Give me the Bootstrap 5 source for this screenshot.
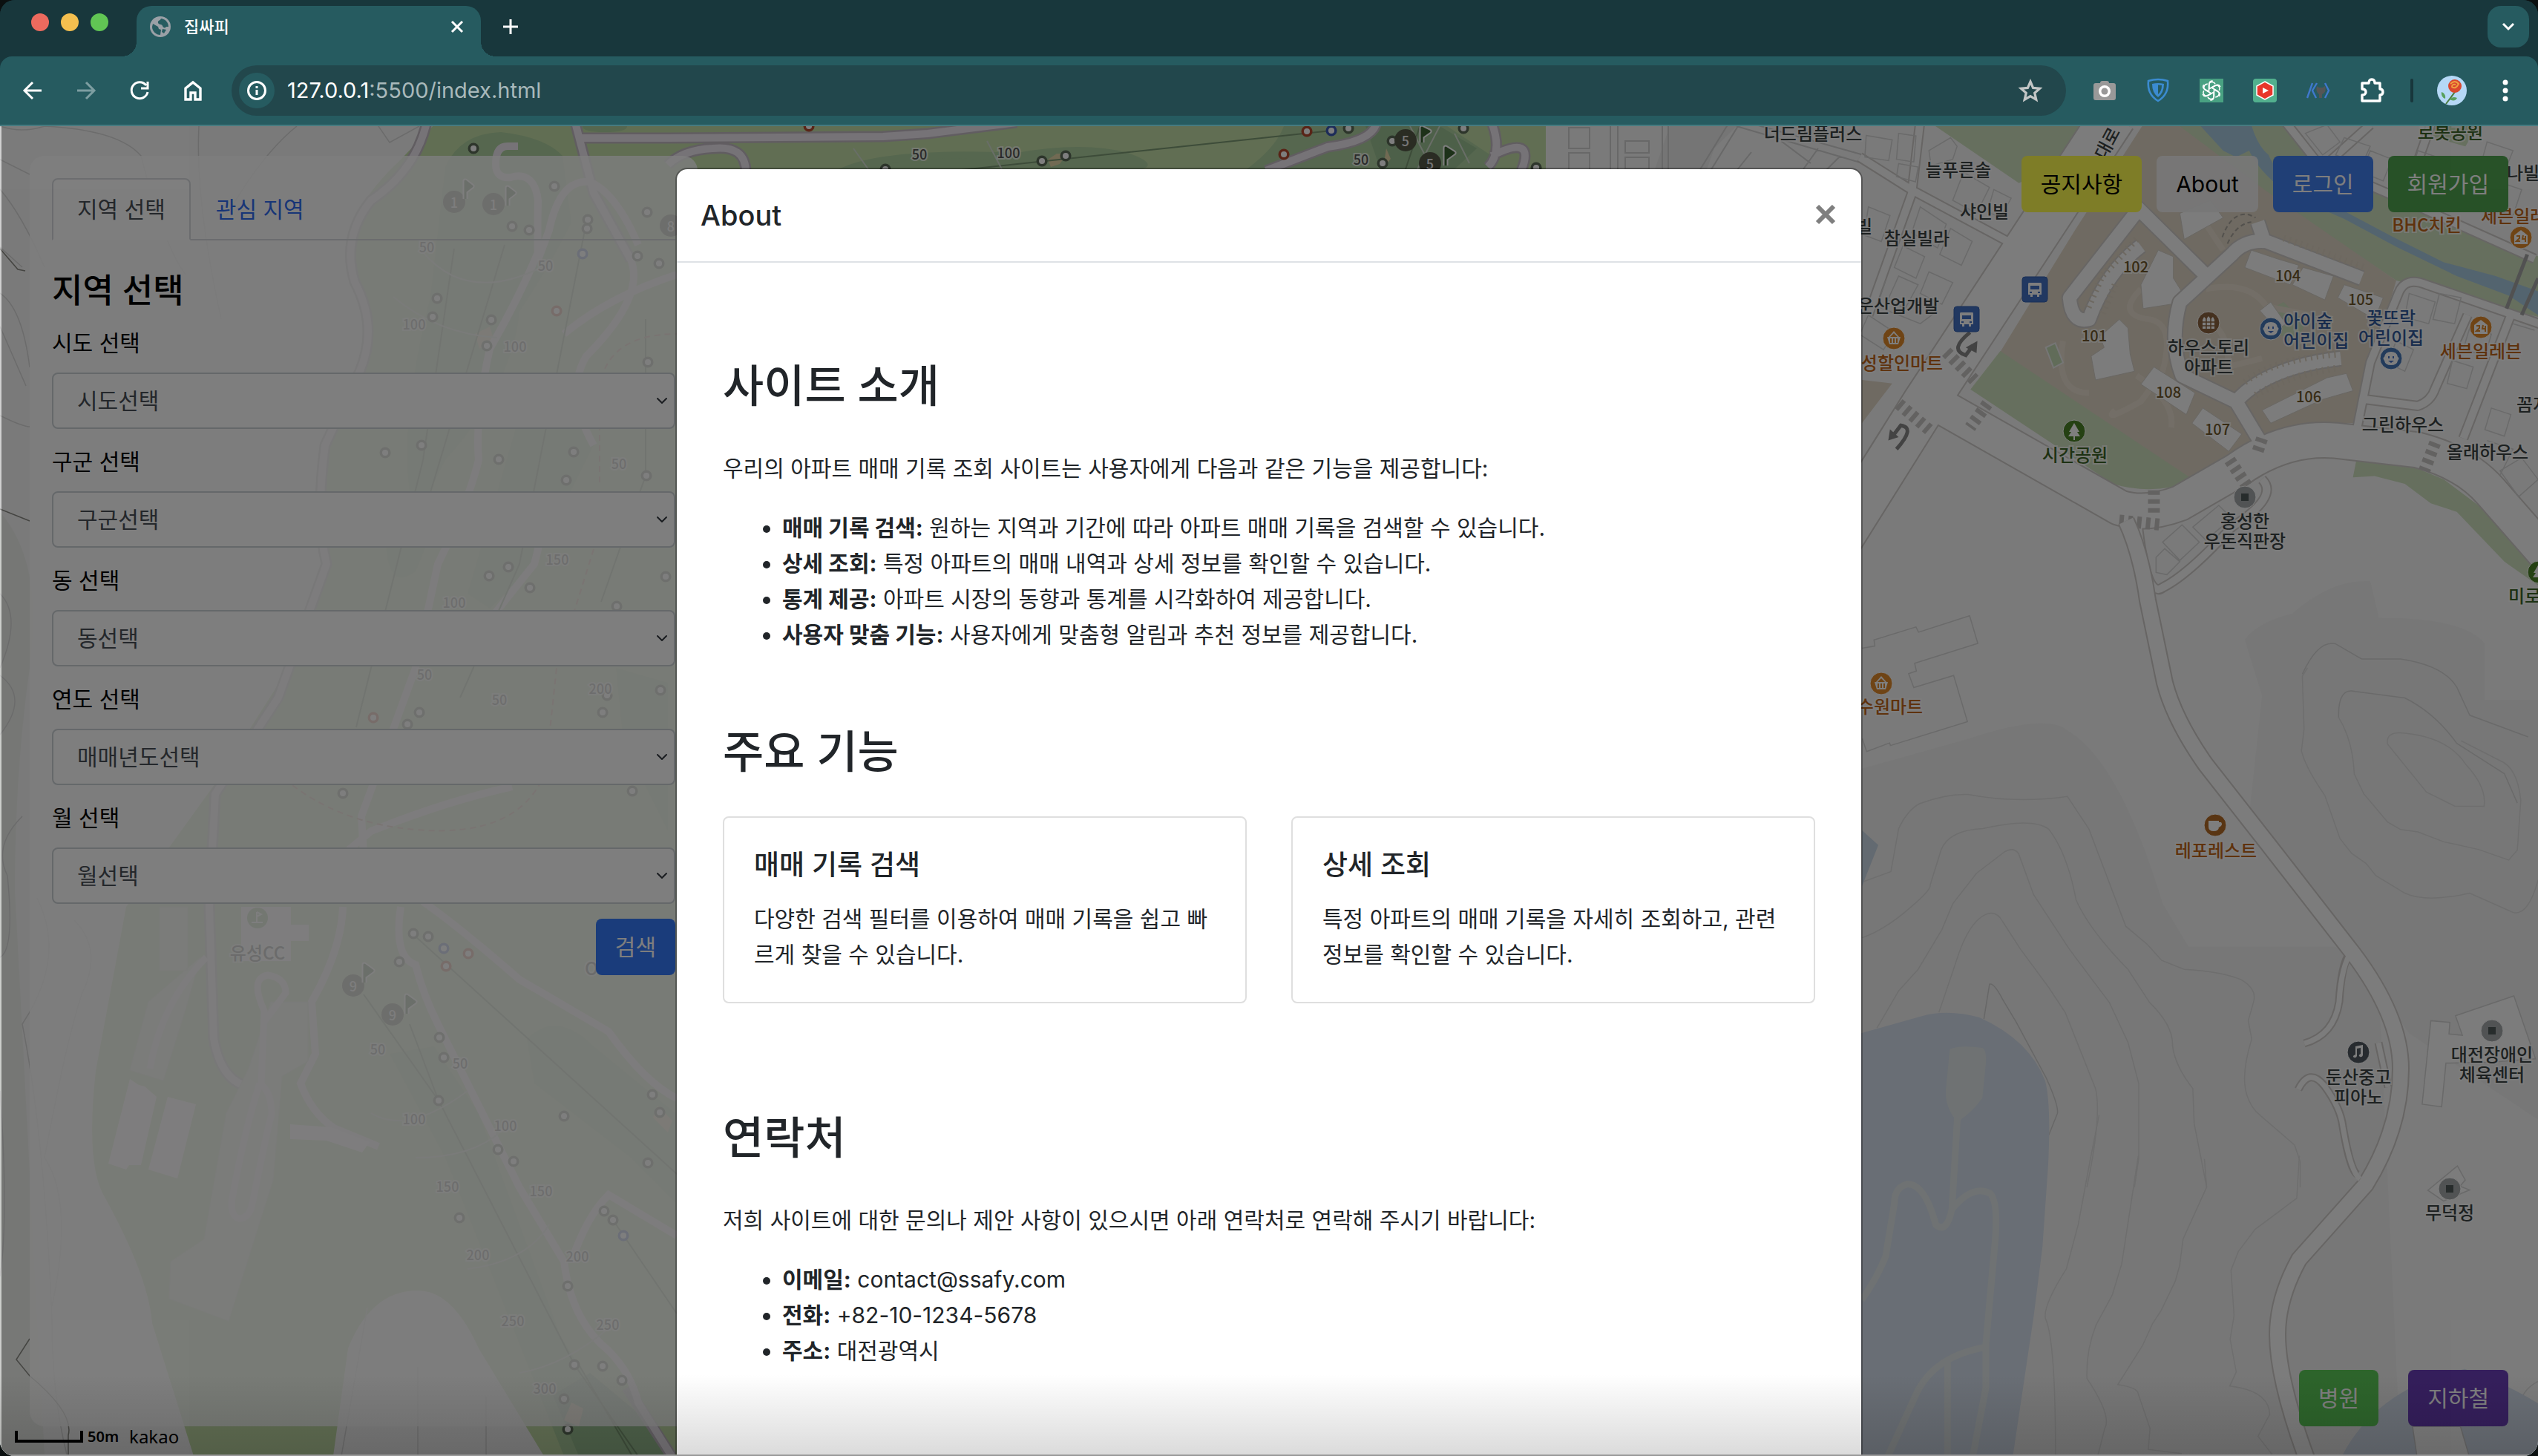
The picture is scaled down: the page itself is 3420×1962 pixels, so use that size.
<!DOCTYPE html>
<html lang="ko">
<head>
<meta charset="utf-8">
<meta name="viewport" content="width=device-width, initial-scale=1">
<title>집싸피</title>
<link href="https://cdn.jsdelivr.net/npm/bootstrap@5.3.0/dist/css/bootstrap.min.css" rel="stylesheet">
<style>
:root{font-size:32px}
html,body{height:100%}
body{font-family:Inter,"Noto Sans CJK KR",sans-serif;font-size:30px;line-height:48px;background:#0b1010;overflow:hidden}
.window{height:100vh;border-radius:20px;overflow:hidden;background:#18373c}
/* browser bars */
.tabstrip{height:76px;background:#18373c;padding:8px 12px 0 42px}
.light{width:24px;height:24px;border-radius:50%;margin-right:16px}
.tab-now{position:relative;width:464px;height:68px;margin-left:22px;padding:0 22px 12px 18px;background:#265b60;border-radius:20px 20px 0 0;color:#fff;font-size:22px}
.tab-now::before,.tab-now::after{content:"";position:absolute;bottom:0;width:20px;height:20px}
.tab-now::before{left:-20px;background:radial-gradient(circle at 0 0,transparent 20px,#265b60 20px)}
.tab-now::after{right:-20px;background:radial-gradient(circle at 100% 0,transparent 20px,#265b60 20px)}
.tab-title{margin-left:18px}
.bare{border:0;background:none;padding:0;line-height:0;color:#fff}
.newtab{height:56px;margin-left:29px}
.chev{width:56px;height:56px;border-radius:18px;background:#265b60}
.toolbar{height:94px;background:#265b60;border-bottom:2px solid #467b80;border-radius:16px 16px 0 0;padding:0 40px 0 26px}
.navset{gap:36px;width:286px}
.omni{height:68px;border-radius:34px;background:#22474c;padding:0 30px 0 10px}
.site-info{width:48px;height:48px;border-radius:50%;background:#265b60}
.url{border:0;background:none;color:#a9b9bb;font-size:29px;line-height:40px;margin-left:17px}
.url b{color:#fff;font-weight:400}
.exts{gap:40px;padding-left:36px}
.exts svg{overflow:visible}
.sep{width:4px;height:32px;border-radius:2px;background:#18373c;margin:0 -8px 0 -4px}
.avatar{margin-right:8px}
/* page */
.stage{background:#f6f6f6}
.mapbg{inset:0;width:100%;height:100%}
.mapbg text{font-family:"Noto Sans CJK KR",sans-serif;font-size:24px;font-weight:500;text-anchor:middle;dominant-baseline:central;fill:#3c4444;stroke:#fff;stroke-width:4px;stroke-opacity:.7;paint-order:stroke}
.mapbg .num{font-size:20px;fill:#70582c}
.mapbg .dist{font-size:18px;fill:#555}
.mapbg .og{fill:#c0651a}.mapbg .gr{fill:#3c6428}.mapbg .bl{fill:#325a9c}.mapbg .st{text-anchor:start}.mapbg .wh{fill:#eee;stroke:none;font-size:18px}
.mapbg path,.mapbg rect{vector-effect:non-scaling-stroke}
.overlay-ui{padding:40px}
.side{width:900px;padding:30px;background:rgba(255,255,255,.8);border-radius:20px;color:#000}
.side .nav-tabs{border-bottom:2px solid #d8dbdf;margin-bottom:36px}
.side .nav-link{border-width:2px;margin-bottom:-2px;padding:16px 32px;border-radius:8px 8px 0 0;color:#2f6cf0}
.side .nav-link.active{color:#495057;border-color:#d8dbdf #d8dbdf #fff;background:#fff}
.side h2{font-size:45px;line-height:64px;margin-bottom:14px}
.side label{display:block;margin-bottom:16px}
.side .form-select{height:76px;border:2px solid #ccd2d6;font-size:30px;line-height:48px;padding:10px 32px;color:#495057;border-radius:8px;margin-bottom:20px;background-position:right 6px center;background-size:20px 16px}
.btn{font-size:30px;line-height:48px;padding:12px 24px;border:2px solid transparent;border-radius:8px}
.btn-search{background:#367af8;color:#fff}
.btn-notice{background:#fefc50;color:#000}
.btn-about{background:rgba(240,240,240,.94);color:#000}
.btn-login{background:#4280ee;color:#fff}
.btn-join{background:#50a450;color:#fff}
.btn-hosp{background:#5cca58;color:#fff}
.btn-metro{background:#6a3eb8;color:#fff}
.actions{gap:20px}
.places{gap:40px}
.stage .modal-backdrop{position:absolute;width:100%;height:100%;border-left:2px solid #aaa}
.credit{position:absolute;z-index:1060;left:20px;bottom:10px;font-family:"Noto Sans",sans-serif;font-size:24px;line-height:32px;color:#000;gap:6px}
.credit small{font-size:20px;font-weight:600}
.scale-bar{width:92px;height:16px;border:4px solid #000;border-top:0}
.stage .modal{position:absolute;overflow:hidden}
.stage .modal-dialog{max-width:1600px;margin:56px auto}
.stage .modal-content{border:2px solid rgba(0,0,0,.3);border-radius:16px;min-height:1800px;color:#212529}
.stage .modal-header{padding:32px;border-bottom:2px solid #dee2e6}
.stage .modal-title{font-size:38px;line-height:60px}
.stage .modal-body{padding:128px 62px}
.stage .modal-body h2{font-size:60px;line-height:76px;margin-bottom:49px}
.stage .modal-body p{margin-bottom:32px}
.stage .modal-body ul{padding-left:80px;margin-bottom:96px}
.stage .modal-body .pair{gap:60px;margin-bottom:143px}
.pair .card{flex:1 1 0;border:2px solid #dfdfdf;border-radius:8px}
.pair .card-body{padding:40px}
.pair h3{font-size:37px;line-height:48px;margin-bottom:24px}
.stage .modal-body .card-text{margin:0}
.dockshade{position:absolute;z-index:1070;left:0;right:0;bottom:0;height:110px;background:linear-gradient(transparent,rgba(0,0,0,.14));border-bottom:2px solid #999;pointer-events:none}
</style>
<script src="https://cdn.jsdelivr.net/npm/bootstrap@5.3.0/dist/js/bootstrap.bundle.min.js"></script>
</head>
<body>
<div class="window d-flex flex-column">
<header>
  <div class="tabstrip d-flex">
    <div class="d-flex align-items-center pb-3 mb-1 pt-2"><span class="light" style="background:#ec6a5e"></span><span class="light" style="background:#f4bf4f"></span><span class="light" style="background:#61c554"></span></div>
    <div class="tab-now d-flex align-items-center">
      <svg width="28" height="28" viewBox="0 0 28 28"><circle cx="14" cy="14" r="14" fill="#9aa0a6"/><path d="M4 10l7 4 1 3 3 1-1 7c-6 0-11-5-11-11zM15 3c-1 3-5 2-4 6 2 3 5 1 6 4s4 3 5 1l3 0c0-6-4-10-10-11zM17 17l5 1-3 5-3-2z" fill="#265b60"/></svg>
      <span class="tab-title flex-grow-1 fw-medium">집싸피</span>
      <button class="bare" aria-label="탭 닫기"><svg width="20" height="20" viewBox="0 0 20 20" stroke="#fff" stroke-width="3"><path d="M3 3l14 14M17 3L3 17"/></svg></button>
    </div>
    <button class="bare newtab" aria-label="새 탭"><svg width="22" height="22" viewBox="0 0 22 22" stroke="#fff" stroke-width="3"><path d="M11 1v20M1 11h20"/></svg></button>
    <button class="bare chev ms-auto" aria-label="탭 검색"><svg width="18" height="12" viewBox="0 0 18 12" fill="none" stroke="#fff" stroke-width="3"><path d="M2 2l7 7 7-7"/></svg></button>
  </div>
  <div class="toolbar d-flex align-items-center">
    <div class="navset d-flex align-items-center">
      <button class="bare" aria-label="뒤로"><svg width="36" height="36" viewBox="0 0 36 36" fill="none" stroke="#fff" stroke-width="3"><path d="M30 18H8M18 7L7 18l11 11"/></svg></button>
      <button class="bare" aria-label="앞으로"><svg width="36" height="36" viewBox="0 0 36 36" fill="none" stroke="#7d9ea1" stroke-width="3"><path d="M6 18h22M18 7l11 11-11 11"/></svg></button>
      <button class="bare" aria-label="새로고침"><svg width="36" height="36" viewBox="0 0 36 36" fill="none" stroke="#fff" stroke-width="3"><path d="M27 11a11 11 0 1 0 2 9M29 6v9h-9"/></svg></button>
      <button class="bare" aria-label="홈"><svg width="36" height="36" viewBox="0 0 36 36" fill="none" stroke="#fff" stroke-width="3.4"><path d="M8 30V15l10-8 10 8v15h-7v-9h-6v9z"/></svg></button>
    </div>
    <div class="omni d-flex align-items-center flex-grow-1">
      <button class="bare site-info" aria-label="사이트 정보"><svg width="28" height="28" viewBox="0 0 28 28" fill="none" stroke="#fff" stroke-width="3"><circle cx="14" cy="14" r="11.500"/><path d="M14 13v7M14 8v3"/></svg></button>
      <span class="url flex-grow-1"><b>127.0.0.1</b>:5500/index.html</span>
      <button class="bare" aria-label="북마크"><svg width="36" height="36" viewBox="0 0 36 36" fill="none" stroke="#c3c6c6" stroke-width="3.2"><path d="M18 6l3.600 8.400 9 .8-6.900 6 2.100 9L18 25.600l-7.800 4.600 2.100-9-6.900-6 9-.8z"/></svg></button>
    </div>
    <div class="exts d-flex align-items-center">
      <svg width="32" height="32" viewBox="0 0 32 32"><path d="M10 6q0-3 3-3h6q3 0 3 3h6q3 0 3 3v17q0 3-3 3H4q-3 0-3-3V9q0-3 3-3z" fill="#999"/><circle cx="16" cy="17" r="8" fill="#fff"/><circle cx="16" cy="17" r="4.500" fill="#999"/></svg>
      <svg width="32" height="32" viewBox="0 0 32 32"><path d="M3 3q13-4 26 0 2 18-13 27Q1 21 3 3z" fill="none" stroke="#3b8bd0" stroke-width="2.600"/><path d="M8 7q8-2 16 0 0 12-8 18Q8 19 8 7z" fill="#3b8bd0"/><path d="M16 8.500q3 0 5 .5 0 8-5 12z" fill="#265b60"/></svg>
      <svg width="32" height="32" viewBox="0 0 32 32"><path fill="#49a182" d="M0 0h32v32H0z"/><g fill="none" stroke="#fff" stroke-width="1.600"><g id="petal"><path d="M12.500 17.500v-8.500q0-4.500 4.500-4.500 2.500 0 4 2.500M16 12.500l6-3.500q4-2 6 2"/></g><use href="#petal" transform="rotate(60 16 16)"/><use href="#petal" transform="rotate(120 16 16)"/><use href="#petal" transform="rotate(180 16 16)"/><use href="#petal" transform="rotate(240 16 16)"/><use href="#petal" transform="rotate(300 16 16)"/></g></svg>
      <svg width="32" height="32" viewBox="0 0 32 32"><rect width="32" height="32" rx="4" fill="#52b08e"/><path d="M16 4l11 6v12l-11 6-11-6V10z" fill="#e8352b" stroke="#fff" stroke-width="1.500"/><path d="M13 12l8 4-8 4z" fill="#fff"/></svg>
      <svg width="32" height="32" viewBox="0 0 32 32" fill="none" stroke="#3f78cc" stroke-width="2.400"><path d="M1 26L8 6M14 6L8 16l5 10M25 6l5 10-5 10"/><path d="M14 10l3 2h5l3-2q2 7-2 10l-2 1v5h-4v-5q-5-3-3-11z" fill="#555" stroke="none"/></svg>
      <svg width="32" height="36" viewBox="2 0 32 36" fill="none" stroke="#fff" stroke-width="3.400" stroke-linejoin="round"><path d="M5 8h9q0-5 4-5t4 5h7v8q4 0 4 4t-4 4v8H5v-8q5 0 5-4t-5-4z"/></svg>
      <span class="sep"></span>
      <svg class="avatar" width="40" height="40" viewBox="0 0 40 40"><circle cx="20" cy="20" r="20" fill="#b5d8f6"/><path d="M24 22L12 38" stroke="#4a7a3a" stroke-width="2"/><path d="M6 22q6 2 5 9-6-2-5-9zM17 32q4-5 10-2-3 6-10 2z" fill="#58a05c"/><circle cx="24" cy="14" r="9" fill="#d9482f"/><path d="M18 11q6-6 11 0-4 8-9 4 0-4 5-3" fill="none" stroke="#f0a040" stroke-width="2"/></svg>
      <svg width="8" height="32" viewBox="0 0 8 32" fill="#fff"><circle cx="4" cy="5" r="3.500"/><circle cx="4" cy="16" r="3.500"/><circle cx="4" cy="27" r="3.500"/></svg>
    </div>
  </div>
</header>
<main class="stage position-relative flex-grow-1 overflow-hidden">
<svg class="mapbg position-absolute" viewBox="0 170 3420 1792" preserveAspectRatio="xMidYMid slice" aria-hidden="true">
  <!-- golf course, west -->
  <path fill="#eef1ec" d="M0 690Q60 760 40 900T20 1200L60 1962H0z"/>
  <path fill="#c4dea8" d="M583 170L540 215Q460 290 470 350Q510 430 488 500L440 600Q425 700 445 760L375 922 287 1060 170 1222 129 1443Q115 1570 141 1613 200 1720 205 1783L261 1962H449L469 1817Q500 1739 563 1739 610 1739 645 1817L733 1962H2083V170z"/>
  <g fill="#aed0a0">
    <path d="M600 225Q620 180 675 178 735 185 758 210L770 300Q740 360 700 420 690 520 600 620L560 700Q530 600 580 400z"/>
    <path d="M785 170h60q0 8-30 8t-30-8z"/><path d="M1130 228q60-30 240-22 90-16 150 0 40 14 20 22z"/><path d="M1180 228q30-20 190-12l20 12zM1730 170h220l60 40v18h-330q40-30 50-58z"/>
    <path d="M520 720q20-60 50-50t-10 100q-40 30-40-50zM700 560l60-20 40 60-80 160-60 60-30-20z"/>
    <path d="M525 1420l60-10 60 90 110 300 100 162H760L600 1560zM710 1400q40-40 90 10l110 90v120l-60-60-130-100zM830 900l70 20v200l-60-120z"/>
  </g>
  <g fill="#9cc294"><path d="M745 1880l50-30 60 50 45 62H780z"/><path d="M1840 170l100 0 50 30-30 28h-100z"/><circle cx="1890" cy="195" r="32"/></g>
  <path fill="#e4d6a8" d="M1412 215l12-8 14 0-10 14-12 4zM1868 200l6 14-10 12zM770 1890l16 8-6 24-20-8zM640 450l20-10 6 20-20 10zM886 1490l20 20-6 16-20-20z"/>
  <g fill="none" stroke="#c4bcc4" stroke-width="15" stroke-linejoin="round"><path d="M575 165Q560 230 500 270 460 320 478 380 510 440 485 500L438 600Q425 700 440 760L375 940 290 1070 282 1222 288 1400Q300 1465 345 1465M775 165L800 260 850 350M780 186H900L1190 184 1250 180 1370 165M900 222q20-20 60-22 45-5 45 32M1855 165Q1850 190 1789 198L1706 230M2010 165q15 40-5 60M2010 210q60-30 40 20M845 1870L905 1962"/></g>
  <path fill="none" stroke="#efe9f1" stroke-width="10" d="M575 165Q560 230 500 270 460 320 478 380 510 440 485 500L438 600Q425 700 440 760L375 940 290 1070 282 1222 288 1400Q300 1465 345 1465M775 165L800 260 850 350Q870 400 790 480 760 530 800 600M780 186H900L1190 184 1250 180 1370 165M900 222q20-20 60-22 45-5 45 32M1855 165Q1850 190 1789 198L1706 230M2010 165q15 40-5 60M2010 210q60-30 40 20M698 197h-14q-16 0-16 24 0 20 20 18Q720 230 725 270 724 320 725 350L740 310Q755 240 795 245 830 260 860 330M725 340Q700 400 660 470 640 560 645 620 630 680 590 760L560 900 487 1100 490 1150 M690 1060Q600 1080 500 1120L470 1145M462 1222Q460 1280 420 1350L425 1420 405 1460Q420 1500 450 1520L510 1545M540 1222Q530 1290 560 1300 570 1340 590 1380L660 1520 700 1600 760 1700Q770 1780 820 1820 850 1850 860 1890L905 1962M570 1215Q620 1250 700 1320L820 1390Q870 1460 912 1480M770 1700Q790 1640 820 1610 870 1640 912 1665M760 450Q820 400 912 370M640 860L720 760 735 700"/>
  <g fill="#fbf6fb"><path d="M325 1222h67v24h24v22h-24v27h-67zM175 1454l12 8 8 2 16 14-21 92-16 0-4 6-24-8zM226 1478l38 10-25 100-39-12zM391 1515l55 4 52 20-10 14-48-16-49-2z"/></g>
  <g fill="#dde6d4" stroke="#cfd8c8" stroke-width="1"><path d="M215 1222h38v86h-38zM200 1350l70-60-20 70-30 96-45-14zM365 1350h50l0 80-35 20-12 140-60 190-80-30 2-50 45-30 30-170 30-60z"/></g>
  <path fill="none" stroke="#efe9f1" stroke-width="9" d="M350 1460q-20 60-38 160 0 20 10 22 14 0 18-20 20-100 26-120 0-30-14-40l4-100q-20-44 5-48 24 4 24 24l-30 40M278 1290q-60 60-76 150"/>
  <g fill="none" stroke="#7c9a74" stroke-width="2"><path d="M612 335L570 620 480 980M680 330L560 730M790 300L700 760 620 940M870 430v211l-60 170M490 1340l101 143 183 356 86 123M552 1380l39 103M560 1262l352 320M826 1644l86 126M1230 236L1794 176M1894 228l20-60M780 1839l72 123"/></g>
  <path fill="none" stroke="#c89488" stroke-width="2" stroke-dasharray="8 6" d="M808 650V520Q820 450 912 450M800 740L750 900 735 1040Q700 1130 560 1118 460 1110 390 1055"/>
  <g fill="none" stroke="#d4ded0" stroke-width="2"><path d="M570 340q60 70 160 20M530 400q60 50 140 55M500 1500q50 30 130-30M560 1560q80 0 120-40M630 1710q80-10 110-60M700 1850q60-10 120-60M1150 200l20 28M1330 190l20 38M1900 170l30 58M1940 170l-30 58M1960 180l20 40"/></g>
  <!-- west contours -->
  <g fill="none" stroke="#d9d9d9" stroke-width="1.500"><path d="M0 170q30 10 60 0 100 5 130 40 30 120 60 160M0 215l40 20M0 255Q30 290 60 360M268 170q-5 100 30 260M400 170q-50 40-100 130M510 170l15 22 40-22M0 333L30 360M0 395q30 20 40 100M0 440l35 80M0 560q30 15 40 15M0 800q30 30 0 100M0 910q40 30 0 80M30 1100q-40 40-20 80 10 100-10 110M0 1470q12 170 0 250M50 1210q40 80-20 170 30 150 40 400 0 100 20 180M100 1240q40 40 10 100-20 60-50 220 40 60 10 200M460 1962l35-200M563 1962v-120M655 1962v-80"/></g>
  <path fill="none" stroke="#8a8a84" stroke-width="1.500" d="M0 686l40 16M40 1804l-18 28 18 22q60 50 52 80v28M0 335l24 28 10 2"/>
  <g fill="none" stroke-linecap="round">
    <path stroke="#5c6c58" stroke-width="15" d="M638 200h.1M747 251h.1M872 286h.1M792 296h.1M791 308h.1M690 305h.1M713 310h.1M859 345h.1M888 355h.1M589 402h.1M583 427h.1M662 431h.1M656 466h.1M519 610h.1M568 600h.1M672 619h.1M773 609h.1M763 647h.1M871 641h.1M685 764h.1M659 776h.1M714 792h.1M831 817h.1M897 777h.1M818 937h.1M812 960h.1M890 930h.1M565 960h.1M549 976h.1M462 1069h.1M852 1066h.1M873 488h.1M557 1258h.1M577 1262h.1M538 1296h.1M592 1398h.1M598 1425h.1M591 1483h.1M760 1504h.1M671 1549h.1M692 1565h.1M619 1641h.1M765 1733h.1M774 1839h.1M812 1841h.1M838 1860h.1M760 1885h.1M765 1926h.1M879 1475h.1M889 1499h.1M873 1567h.1M814 1632h.1M826 1644h.1M1404 217h.1M1436 210h.1M1817 173h.1M1876 190h.1M1863 220h.1M1972 173h.1M2070 226h.1M1193 228h.1"/>
    <path stroke="#3c5ab4" stroke-width="15" d="M598 1278h.1M840 1665h.1M785 342h.1M1794 176h.1"/>
    <path stroke="#b44a30" stroke-width="15" d="M631 1285h.1M601 1302h.1M503 967h.1M750 419h.1M1090 170h.1M1730 208h.1M1761 177h.1"/>
    <path stroke="#fff" stroke-width="8" d="M638 200h.1M747 251h.1M872 286h.1M792 296h.1M791 308h.1M690 305h.1M713 310h.1M859 345h.1M888 355h.1M589 402h.1M583 427h.1M662 431h.1M656 466h.1M519 610h.1M568 600h.1M672 619h.1M773 609h.1M763 647h.1M871 641h.1M685 764h.1M659 776h.1M714 792h.1M831 817h.1M897 777h.1M818 937h.1M812 960h.1M890 930h.1M565 960h.1M549 976h.1M462 1069h.1M852 1066h.1M873 488h.1M557 1258h.1M577 1262h.1M538 1296h.1M592 1398h.1M598 1425h.1M591 1483h.1M760 1504h.1M671 1549h.1M692 1565h.1M619 1641h.1M765 1733h.1M774 1839h.1M812 1841h.1M838 1860h.1M760 1885h.1M765 1926h.1M879 1475h.1M889 1499h.1M873 1567h.1M814 1632h.1M826 1644h.1M1404 217h.1M1436 210h.1M1817 173h.1M1876 190h.1M1863 220h.1M1972 173h.1M2070 226h.1M1193 228h.1M598 1278h.1M840 1665h.1M785 342h.1M1794 176h.1M631 1285h.1M601 1302h.1M503 967h.1M750 419h.1M1090 170h.1M1730 208h.1M1761 177h.1"/>
  </g>
  <g fill="#555a48"><circle cx="612" cy="272" r="15"/><circle cx="665" cy="275" r="15"/><circle cx="904" cy="304" r="15"/><circle cx="476" cy="1328" r="15"/><circle cx="529" cy="1367" r="15"/><circle cx="1894" cy="189" r="15"/><circle cx="1927" cy="220" r="15"/></g>
  <g fill="none" stroke-linejoin="round"><path stroke="#fff" stroke-width="7" d="M627 268v-24l9 7-9 7M684 277v-24l9 7-9 7M491 1324v-24l11 8-11 8M548 1366v-24l11 8-11 8M1916 192v-20l10 5-10 7M1948 223v-24l11 7-11 8"/><path stroke="#3c6434" stroke-width="3" fill="#3c6434" d="M627 268v-24l9 7-9 7M684 277v-24l9 7-9 7M491 1324v-24l11 8-11 8M548 1366v-24l11 8-11 8M1916 192v-20l10 5-10 7M1948 223v-24l11 7-11 8"/></g>
  <circle cx="347" cy="1237" r="14" fill="#8cb87c"/><path d="M346 1229v14M346 1229l6 3-6 3M339 1243h15" stroke="#fff" stroke-width="2" fill="none"/>
  <text class="wh" x="612" y="272">1</text><text class="wh" x="665" y="275">1</text><text class="wh" x="904" y="304">8</text><text class="wh" x="476" y="1328">9</text><text class="wh" x="529" y="1367">9</text><text class="wh" x="1894" y="189">5</text><text class="wh" x="1927" y="220">5</text>
  <text x="347" y="1282">유성CC</text><text x="797" y="1303">O</text>
  <text class="dist" x="575" y="332">50</text><text class="dist" x="735" y="357">50</text><text class="dist" x="558" y="436">100</text><text class="dist" x="694" y="466">100</text><text class="dist" x="751" y="753">150</text><text class="dist" x="612" y="811">100</text><text class="dist" x="834" y="624">50</text><text class="dist" x="572" y="908">50</text><text class="dist" x="673" y="942">50</text><text class="dist" x="809" y="927">200</text><text class="dist" x="509" y="1413">50</text><text class="dist" x="620" y="1432">50</text><text class="dist" x="558" y="1507">100</text><text class="dist" x="681" y="1516">100</text><text class="dist" x="603" y="1598">150</text><text class="dist" x="729" y="1604">150</text><text class="dist" x="644" y="1690">200</text><text class="dist" x="778" y="1692">200</text><text class="dist" x="691" y="1779">250</text><text class="dist" x="819" y="1784">250</text><text class="dist" x="734" y="1870">300</text><text class="dist" x="1239" y="207">50</text><text class="dist" x="1359" y="205">100</text><text class="dist" x="1834" y="214">50</text>
  <!-- town strip above the dialog -->
  <path fill="#ececec" d="M2250 170h90l-30 30-10 28h-70z"/>
  <g fill="none" stroke="#d2d2d2" stroke-width="2"><path d="M2170 165v70M2180 165v70M2240 165v70M2248 165v70M2114 172h28v28h-28zM2114 206h28v24h-28zM2190 190h32v16h-32zM2190 212h32v16h-32zM2330 165l-40 65M2345 165l-40 65M2400 190l40 30M2360 205l-20 25M2340 170l170 50M2355 165l160 45M2450 200l-20 28M2480 210l-20 20"/></g>
  <!-- east: residential blocks and river -->
  <g transform="translate(2506 168) scale(.583)">
    <path fill="#f0f0f0" d="M890 1190Q920 1150 1000 1130 1090 1050 1180 1055L1200 1140Q1400 1140 1445 1200V1330H1568V2300L1270 2100 900 1600 930 1320zM0 1490L250 1420Q430 1360 480 1400 600 1470 700 1800L760 1900H1100L1200 2000 1250 3080H0z"/>
    <path fill="#cfe0bf" d="M170 0H530L490 72 368 135zM735 0h245l60 75 320 150 210 80v140L1240 360 1060 240 900 150zM1300 0h130l-30 50-70-20z"/>
    <path fill="#e0d6c6" d="M655 0h80l200 150 130 90 175 120-95 330-85 0-150 50L770 822 325 525 500 240zM5 590l70 8L5 690z"/>
    <path fill="#cfe0bf" d="M325 523L256 612 585 830Q650 850 720 838L770 820zM1148 775L1290 795 1350 820 1430 880 1568 1030V1065L1490 1010 1380 895 1320 875 1260 830 1190 812 1140 815zM940 430l40-20 50 50-20 40-60-20z"/>
    <path fill="#a8cbe0" d="M785 0H905Q920 50 945 70 960 110 1010 130L1120 200 1230 258 1350 318 1470 350 1568 385V440L1500 395 1380 350 1240 282 1120 218 1000 165Q930 120 900 60L870 75 840 60z"/>
    <g fill="none" stroke="#e8dfd0" stroke-width="8"><path d="M650 380q-60 60 20 70 60 10 30 120l-50 70q-90 50-60 20M800 380q100-20 140 40l100 20M640 580q90 60 80 120M470 500q-20 120 60 120M780 200l60 90M790 440q70 40 60 120l80-20"/></g>
    <g fill="#fafafa" stroke="#d4d0c8" stroke-width="1"><path d="M650 370l40-80 35 15 0 50 25 40-30 20-65 10zM740 205l70-30 30 40-90 50zM890 330l15-40 60 20 50 15-20 45zM1000 370l25-40 70 20-20 55zM1105 400l15-30 90 30-20 50zM555 490l45-40 20 20 5 60 10 40-90 20-10-55 30-20zM650 600l30-40 95 60-20 50zM768 690l25-35 90 60-30 40zM930 660l150-75 45-10 15 40-70 20-120 55zM925 430l25-20 35 50-20 15z"/></g>
    <path fill="#c5dbb5" stroke="#eee" stroke-width="2" d="M430 515l22-10 18 45-22 12z"/>
    <g fill="none" stroke="#d0cdca" stroke-linejoin="round">
      <path stroke-width="64" d="M587-20L150 645-60 980"/><path stroke-width="50" d="M160 635L600 885Q660 905 740 875L870 800Q980 720 1100 730L1290 752Q1400 780 1460 850L1600 1010"/>
      <path stroke-width="22" d="M640 190L812 360M1160 355L940 270Q890 265 860 300L740 410Q715 500 745 580L870 640 930 740M870 640Q940 560 1112 540M920 225l15 45M645 195L485 400Q490 460 530 450 570 340 650 280"/>
      <path stroke-width="14" d="M1150 700L1180 550 1245 390Q1260 350 1310 370L1600 470M1170 635L1290 650Q1320 640 1330 610L1405 440M1505 440L1395 725M0 75L122 152 380 290M140-10L120 160 20 440M640 900Q660 1100 700 1070 760 1040 860 930 970 860 930 820M985-5L1060 90 1270 180 1560 310M1180 0L1080 90M1320 0L1260 170"/>
    </g>
    <g fill="none" stroke="#fafafa" stroke-linejoin="round">
      <path stroke-width="60" d="M587-20L150 645-60 980"/><path stroke-width="46" d="M160 635L600 885Q660 905 740 875L870 800Q980 720 1100 730L1290 752Q1400 780 1460 850L1600 1010"/>
      <path stroke-width="18" d="M640 190L812 360M1160 355L940 270Q890 265 860 300L740 410Q715 500 745 580L870 640 930 740M870 640Q940 560 1112 540M920 225l15 45M645 195L485 400Q490 460 530 450 570 340 650 280"/>
      <path stroke-width="10" d="M1150 700L1180 550 1245 390Q1260 350 1310 370L1600 470M1170 635L1290 650Q1320 640 1330 610L1405 440M1505 440L1395 725M0 75L122 152 380 290M140-10L120 160 20 440M640 900Q660 1100 700 1070 760 1040 860 930 970 860 930 820M985-5L1060 90 1270 180 1560 310M1180 0L1080 90M1320 0L1260 170"/>
    </g>
    <g fill="none" stroke="#d6d6d6" stroke-width="1.500">
      <path d="M15 25l60 10-8 48-55-8zM90 20l40 6-5 60-40-6zM90 90l45 8-6 34-44-12zM160 60l50-30 15 20-10 30-50 15zM240 110l60 35-30 60-55-30zM310 150l40 20-25 45-30-14zM140 190l60 40-20 55-60-35zM100 280l50 25-20 50-50-25zM210 240l50 30-25 55-50-25zM160 340l55 25-25 50-50-25zM90 350l45 20-30 55-40-20zM20 190l50 20-20 60-40-15zM20 440l60 40-25 40-55-35zM60 360l-20 60 100 40 40-30"/>
      <path d="M1030 20l50-20 30 40-40 30zM1120 30l60 20-20 45-60-25zM1180 60l50 20-20 50-50-20zM1290 60l60 20-25 50-50-20zM1370 100l60 20-20 60-55-20zM1450 40l60 20-20 50-55-15zM1470 130l60 20-20 60-60-20zM1270 390l60 20-15 50-55-15zM1340 390l50 10-15 60-50-10zM1240 500l40 20-20 50-40-20zM1410 470l50 14-15 50-50-15zM1370 545l48 15-15 50-45-12zM1460 655l45 15-15 50-45-15zM1510 460l50 15M1480 800l50-30 38 50-45 40zM1450 730l60 20-30 60M700 965l45-40 40 40-45 42zM770 930l60-50 30 30-60 50zM685 1000l20-20 35 30-30 30-25-5z"/>
      <path d="M5 1210l30-5-2-14 97-30 6 12 118-38 19 64-146 46 4 18-18 6 12 32 92-28 32 107-178 55-2-6-53 20-10-30"/>
      <path d="M1023 1270Q1060 1190 1100 1200L1160 1235H1250Q1350 1250 1380 1300L1410 1365 1545 1415M1107 1370Q1105 1300 1145 1310L1260 1325Q1330 1360 1380 1430L1490 1500 1520 1568"/>
    </g>
    <g fill="none" stroke="#c9c6c4" stroke-width="16" stroke-dasharray="6 6"><path d="M200 525L265 590M90 645L160 705M295 645L255 700M680 845V905M855 775L895 835M1330 735L1305 800M600 915L700 925M930 725l-10 30"/></g>
    <path fill="none" stroke="#dcd2c2" stroke-width="9" stroke-dasharray="2 6" d="M640 265L560 350 525 430M590 370L560 440M980 262L1165 330M890 595Q960 540 1110 530M915 625Q1000 575 1110 562"/>
    <path fill="none" stroke="#a8a49c" stroke-width="2" stroke-dasharray="6 4" d="M838 260Q860 200 900 208L915 215M850 275Q870 230 905 225"/>
    <g fill="none" stroke="#888" stroke-width="5"><path d="M255 480Q205 520 245 533L262 510M85 750Q130 700 95 695L80 715"/></g><path fill="#888" d="M245 515l27-15-2 28zM66 730l4-26 20 18z"/>
    <path fill="none" stroke="#a5a5a5" stroke-width="5" d="M1543 300L1495 425M1568 355L1530 440"/>
  </g>
  <!-- southern road -->
  <g fill="none" stroke-linejoin="round"><path stroke="#d0cdca" stroke-width="24" d="M2865 702Q2885 745 2894 809L2917 920Q2930 970 2972 1030L3066 1150 3171 1285Q3235 1370 3235 1440 3235 1520 3188 1596L3098 1697Q3069 1750 3069 1798 3069 1860 3110 1970"/><path stroke="#d0cdca" stroke-width="11" d="M3166 1285Q3155 1300 3152 1350 3145 1395 3105 1406M3097 1468q15-30 35-5 22 30 25 55 10 60 20 65M3205 1405l13 60"/><path stroke="#fafafa" stroke-width="20" d="M2865 702Q2885 745 2894 809L2917 920Q2930 970 2972 1030L3066 1150 3171 1285Q3235 1370 3235 1440 3235 1520 3188 1596L3098 1697Q3069 1750 3069 1798 3069 1860 3110 1970"/><path stroke="#fafafa" stroke-width="7" d="M3170 1280Q3155 1300 3152 1350 3145 1395 3105 1406M3097 1468q15-30 35-5 22 30 25 55 10 60 23 71M3205 1405l13 60"/></g>
  <g transform="translate(2506 900) scale(.583 .4464)" fill="none" stroke="#dedede" stroke-width="1.500">
    <path d="M5 647L72 615 90 485Q110 430 138 410 200 380 250 382 360 410 480 388L530 487 615 780 665 835 698 883 750 910Q830 915 880 940 920 970 910 1010L898 1065 906 1120Q880 1230 895 1290 905 1330 925 1350L1005 1440 1018 1490V1568M5 815Q60 790 120 720 165 670 163 655L188 550Q205 490 285 485 400 450 437 487 480 560 500 700 530 790 620 910L670 1010Q725 1080 723 1140 728 1200 770 1270L773 1375 802 1568M40 1087L90 975 135 910 190 790 215 712 270 620 335 555Q355 540 367 560L402 685 485 850 577 1010 620 1130 645 1255V1480L635 1568M183 1040L222 890Q250 770 290 745 315 730 330 765L372 850 437 965 475 1040 545 1270Q560 1350 525 1568M1021 250L1027 185 1023 25 1035 0M1021 250Q1030 300 1075 385L1110 515 1137 560 1170 590 1193 627 1260 680Q1310 710 1410 680L1510 738Q1545 750 1568 640M1107 150Q1140 220 1143 320L1165 380 1220 465 1250 488 1290 495 1350 525 1430 548 1500 580 1520 550 1528 400Q1520 300 1480 280L1390 220M1220 230Q1215 190 1260 197 1360 210 1400 290 1450 360 1443 418L1375 417 1310 375z"/>
    <path stroke="#d0d0d0" d="M287 1060L300 955Q310 950 330 1000L362 1070 430 1235Q460 1320 457 1345L437 1410"/>
    <path fill="#fafafa" stroke="#d4d4d4" d="M1377 1050L1512 990 1562 1180 1460 1190 1355 1193 1345 1325 1300 1317 1320 1065 1364 1070 1362 1105 1393 1109z"/>
    <path stroke="none" fill="#c8d6e4" d="M5 490L43 535 5 660z"/>
  </g>
  <g transform="translate(2500 1300) scale(.5867 .4222)" fill="none" stroke="#dedede" stroke-width="1.500">
    <path d="M560 480L540 620 512 830 485 970Q430 1090 437 1130 460 1200 460 1568M650 610L612 955 590 1055 553 1150Q530 1230 532 1320 590 1440 573 1480L557 1568M802 620L807 710 753 875 745 960 735 1010 702 1105 683 1145 660 1215 603 1340Q650 1350 650 1370L677 1480 673 1547 750 1560M1020 610L1014 745 918 845 880 915 863 975 870 1120 861 1195 875 1300 860 1345Q950 1360 952 1435L925 1505 960 1568M1568 1330q-40 30-40 80"/>
    <path stroke="none" fill="#d4deec" d="M15 218L150 165Q210 140 285 168 400 240 436 370 450 440 443 640L430 900 410 1120 362 1568H0V218zM1118 1568Q1200 1350 1400 1290 1500 1340 1568 1400V1568z"/>
    <path stroke="none" fill="#e0e7e8" d="M217 270q20-15 75-5 10 8 8 50l-8 110q-20 40-50 70l-14-5q-22-40-20-90z"/>
    <path stroke="#e0e7e8" stroke-width="9" d="M235 480L222 780Q270 700 310 730 330 760 320 900L300 1210 300 1350 270 1568M222 780Q210 860 185 830 160 700 120 700 90 710 90 760L70 930Q50 1000 15 1070M300 1220Q180 1250 140 1370L75 1568M212 1260V1568"/>
    <path fill="#fafafa" stroke="#ccc" d="M1280 1474h110l20 94h-120z"/>
    <path fill="#fafafa" stroke="#d4d4d4" d="M1315 720l68-78 18 45-12 20 22 12-60 35z"/>
  </g>
  <!-- markers -->
  <g stroke="#fff" stroke-width="1"><g fill="#e08a2c"><circle cx="2552" cy="456" r="15"/><circle cx="2535" cy="921" r="15"/><circle cx="3397" cy="320" r="15"/><circle cx="3343" cy="441" r="15"/></g><circle cx="2985" cy="1112" r="15" fill="#b46c28"/><circle cx="2976" cy="435" r="15" fill="#8c6440"/><g fill="#4678b8"><circle cx="3060" cy="443" r="15"/><circle cx="3222" cy="483" r="15"/></g><g fill="#4c8428"><circle cx="2795" cy="581" r="15"/><circle cx="3421" cy="771" r="15"/></g><g fill="#a4a8aa"><circle cx="3025" cy="670" r="15"/><circle cx="3358" cy="1389" r="15"/><circle cx="3301" cy="1602" r="15"/></g><circle cx="3178" cy="1418" r="15" fill="#505860"/><g fill="#4472c4" stroke="#3460b0"><rect x="2725" y="373" width="34" height="34" rx="4"/><rect x="2633" y="413" width="34" height="34" rx="4"/></g></g>
  <g fill="#fff"><path id="basket" d="M2543 454h18l-3 10h-12zM2545 454l7-8 7 8-2 0-5-5-5 5z"/><use href="#basket" x="-17" y="465"/><path id="house" d="M3397 310l9 7v12h-18v-12z"/><use href="#house" x="-54" y="121"/><path id="bus" d="M2734 381h16q1 0 1 2v14h-3v3h-3v-3h-6v3h-3v-3h-3v-14q0-2 1-2z"/><use href="#bus" x="-92" y="40"/><path id="kid" d="M3060 434q8 0 9 7 3 1 0 5-1 6-9 6t-9-6q-3-4 0-5 1-7 9-7z"/><use href="#kid" x="162" y="40"/><path d="M2968 431l2-4 3 3 3-4 3 4 3-3 2 4v12h-16zM2795 570l7 12h-3l4 6h-7v5h-2v-5h-7l4-6h-3zM3421 760l-7 12h3l-4 6h8zM2976 1106h14v8q0 6-7 6t-7-6zM2990 1108h3q3 4-3 7zM3174 1410l10-2v14q-1 3-4 2-3-2 1-4v-8l-5 1v10q-1 3-4 2-3-2 2-4z"/></g>
  <path fill="none" stroke="#e08a2c" stroke-width="2" d="M3391 318h4v3l-4 4h5M3400 317l-1 5h5M3403 318v8M3337 439h4v3l-4 4h5M3346 438l-1 5h5M3349 439v8"/>
  <g fill="#4472c4"><path d="M2736 385h12v5h-12zM2735 393h3v2h-3zM2746 393h3v2h-3zM2644 425h12v5h-12zM2643 433h3v2h-3zM2654 433h3v2h-3zM3056 440h2v3h-2zM3062 440h2v3h-2zM3056 446h8l-4 3zM3218 480h2v3h-2zM3224 480h2v3h-2zM3218 486h8l-4 3z"/></g>
  <path fill="#505a5a" d="M3020 665h10v10h-10zM3353 1384h10v10h-10zM3296 1597h10v10h-10z"/>
  <path stroke="#8c6440" stroke-width="1.500" d="M2968 434h16M2968 439h16M2973 428v15M2979 428v15" fill="none"/><path stroke="#e08a2c" stroke-width="2" d="M2548 456v6M2552 456v6M2556 456v6M2531 921v6M2535 921v6M2539 921v6" fill="none"/>
  <text x="2443" y="178">너드림플러스</text><text x="2639" y="227">늘푸른솔</text><text x="2674" y="283">샤인빌</text><text x="2583" y="319">참실빌라</text><text x="2512" y="303">빌</text><text x="2558" y="410">운산업개발</text><text class="og" x="2563" y="487">성할인마트</text>
  <text x="2838" y="192" transform="rotate(-62 2838 192)">대로</text><text class="gr" x="3302" y="176">로봇공원</text><text x="3400" y="231">나빌</text><text class="og" x="3270" y="301">BHC치킨</text><text class="og st" x="3343" y="289">세븐일레</text>
  <text class="num" x="2878" y="358">102</text><text class="num" x="2822" y="451">101</text><text class="num" x="3083" y="370">104</text><text class="num" x="3181" y="402">105</text><text class="num" x="2922" y="527">108</text><text class="num" x="2988" y="577">107</text><text class="num" x="3111" y="533">106</text>
  <text class="bl st" x="3077" y="430">아이숲</text><text class="bl st" x="3077" y="457">어린이집</text><text class="bl" x="3222" y="426">꽃뜨락</text><text class="bl" x="3222" y="453">어린이집</text><text x="2976" y="466">하우스토리</text><text x="2976" y="492">아파트</text><text class="og" x="3343" y="471">세븐일레븐</text><text x="3238" y="570">그린하우스</text><text x="3352" y="607">올래하우스</text><text class="st" x="3391" y="543">꼼지</text><text class="gr" x="2796" y="611">시간공원</text><text x="3025" y="700">홍성한</text><text x="3025" y="727">우돈직판장</text><text class="gr st" x="3380" y="801">미로</text><text class="og" x="2547" y="950">수원마트</text><text class="og" x="2986" y="1144">레포레스트</text><text x="3178" y="1449">둔산중고</text><text x="3178" y="1476">피아노</text><text x="3358" y="1419">대전장애인</text><text x="3358" y="1446">체육센터</text><text x="3301" y="1632">무덕정</text>
</svg>
<div class="overlay-ui position-relative d-flex justify-content-between h-100">
  <aside class="side">
    <ul class="nav nav-tabs">
      <li class="nav-item"><a class="nav-link active" href="#region">지역 선택</a></li>
      <li class="nav-item"><a class="nav-link" href="#favorite">관심 지역</a></li>
    </ul>
    <form id="region">
      <h2>지역 선택</h2>
      <label for="sido">시도 선택</label><select class="form-select" id="sido"><option>시도선택</option></select>
      <label for="gugun">구군 선택</label><select class="form-select" id="gugun"><option>구군선택</option></select>
      <label for="dong">동 선택</label><select class="form-select" id="dong"><option>동선택</option></select>
      <label for="year">연도 선택</label><select class="form-select" id="year"><option>매매년도선택</option></select>
      <label for="month">월 선택</label><select class="form-select" id="month"><option>월선택</option></select>
      <div class="text-end"><button type="button" class="btn btn-search">검색</button></div>
    </form>
  </aside>
  <div class="d-flex flex-column justify-content-between align-items-end">
    <div class="d-flex actions"><button class="btn btn-notice">공지사항</button><button class="btn btn-about">About</button><button class="btn btn-login">로그인</button><button class="btn btn-join">회원가입</button></div>
    <div class="d-flex places"><button class="btn btn-hosp">병원</button><button class="btn btn-metro">지하철</button></div>
  </div>
</div>
<div class="modal-backdrop show"></div>
<div class="credit d-flex align-items-center"><span class="scale-bar"></span><small>50m</small><span class="ms-1">kakao</span></div>
<div class="modal show d-block" role="dialog" aria-labelledby="aboutTitle">
  <div class="modal-dialog">
    <div class="modal-content">
      <div class="modal-header"><h1 class="modal-title" id="aboutTitle">About</h1>
        <button class="bare ms-auto" aria-label="닫기"><svg width="32" height="28" viewBox="0 0 32 28" stroke="#7f7f7f" stroke-width="6"><path d="M5 2l22 22M27 2L5 24"/></svg></button></div>
      <div class="modal-body">
        <h2>사이트 소개</h2>
        <p>우리의 아파트 매매 기록 조회 사이트는 사용자에게 다음과 같은 기능을 제공합니다:</p>
        <ul>
          <li><strong>매매 기록 검색:</strong> 원하는 지역과 기간에 따라 아파트 매매 기록을 검색할 수 있습니다.</li>
          <li><strong>상세 조회:</strong> 특정 아파트의 매매 내역과 상세 정보를 확인할 수 있습니다.</li>
          <li><strong>통계 제공:</strong> 아파트 시장의 동향과 통계를 시각화하여 제공합니다.</li>
          <li><strong>사용자 맞춤 기능:</strong> 사용자에게 맞춤형 알림과 추천 정보를 제공합니다.</li>
        </ul>
        <h2>주요 기능</h2>
        <div class="pair d-flex">
          <div class="card"><div class="card-body"><h3>매매 기록 검색</h3><p class="card-text">다양한 검색 필터를 이용하여 매매 기록을 쉽고 빠르게 찾을 수 있습니다.</p></div></div>
          <div class="card"><div class="card-body"><h3>상세 조회</h3><p class="card-text">특정 아파트의 매매 기록을 자세히 조회하고, 관련 정보를 확인할 수 있습니다.</p></div></div>
        </div>
        <h2>연락처</h2>
        <p>저희 사이트에 대한 문의나 제안 사항이 있으시면 아래 연락처로 연락해 주시기 바랍니다:</p>
        <ul>
          <li><strong>이메일:</strong> contact@ssafy.com</li>
          <li><strong>전화:</strong> +82-10-1234-5678</li>
          <li><strong>주소:</strong> 대전광역시</li>
        </ul>
      </div>
    </div>
  </div>
</div>
<div class="dockshade"></div>
</main>
</div>
</body>
</html>
